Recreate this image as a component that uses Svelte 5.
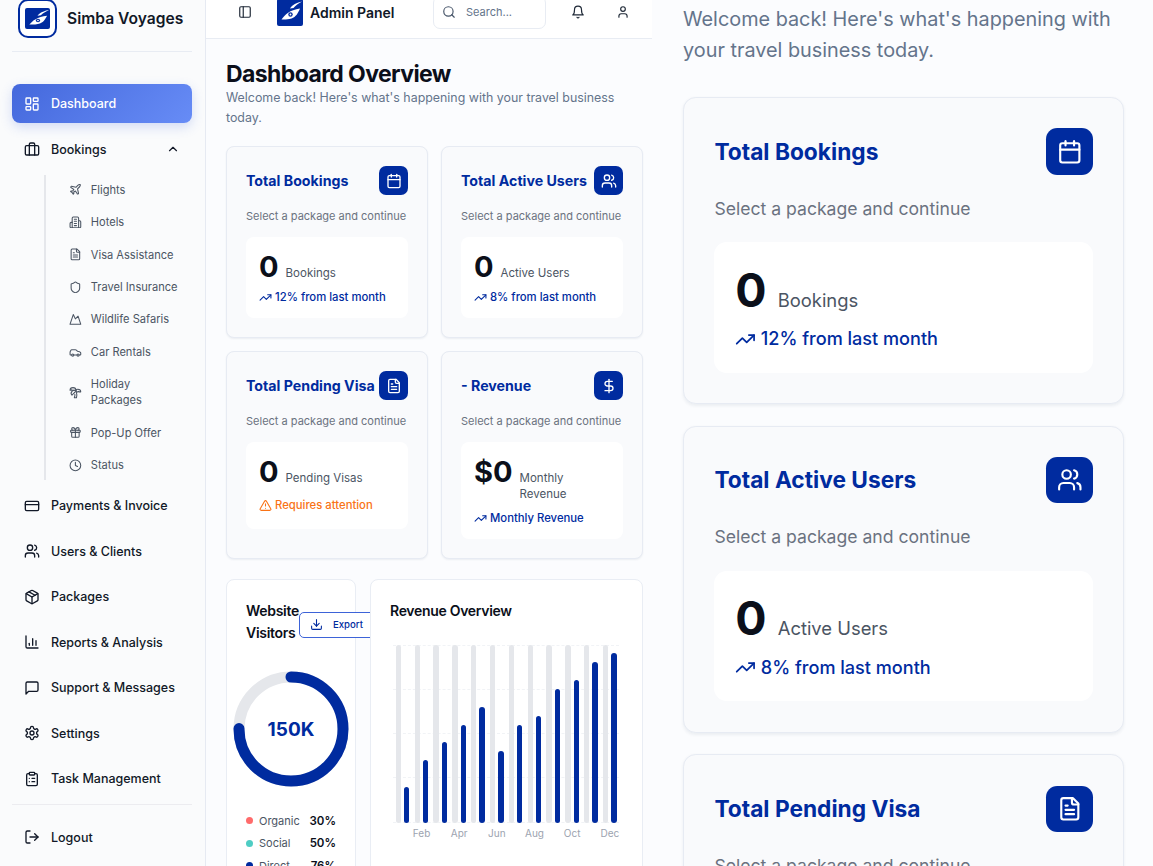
<script>
  const c = (x, y, r) => `M${x - r} ${y}a${r} ${r} 0 1 0 ${2 * r} 0a${r} ${r} 0 1 0 ${-2 * r} 0`;
  const r = (x, y, w, h, q) => `M${x + q} ${y}h${w - 2 * q}a${q} ${q} 0 0 1 ${q} ${q}v${h - 2 * q}a${q} ${q} 0 0 1 ${-q} ${q}h${-(w - 2 * q)}a${q} ${q} 0 0 1 ${-q} ${-q}v${-(h - 2 * q)}a${q} ${q} 0 0 1 ${q} ${-q}z`;

  const icons = {
    dashboard: [r(3, 3, 7, 9, 1), r(14, 3, 7, 5, 1), r(14, 12, 7, 9, 1), r(3, 16, 7, 5, 1)],
    briefcase: [r(2, 7, 20, 14, 2), 'M16 21V5a2 2 0 0 0-2-2h-4a2 2 0 0 0-2 2v16'],
    chevronUp: ['m18 15-6-6-6 6'],
    plane: ['M17.8 19.2 16 11l3.5-3.5C21 6 21.5 4 21 3c-1-.5-3 0-4.5 1.5L13 8 4.8 6.2c-.5-.1-.9.1-1.1.5l-.3.5c-.2.5-.1 1 .3 1.3L9 12l-2 3H4l-1 1 3 2 2 3 1-1v-3l3-2 3.5 5.3c.3.4.8.5 1.3.3l.5-.2c.4-.3.6-.7.5-1.2z'],
    hotel: ['M6 22V4a2 2 0 0 1 2-2h8a2 2 0 0 1 2 2v18Z', 'M6 12H4a2 2 0 0 0-2 2v6a2 2 0 0 0 2 2h2', 'M18 9h2a2 2 0 0 1 2 2v9a2 2 0 0 1-2 2h-2', 'M10 6h4', 'M10 10h4', 'M10 14h4', 'M10 18h4'],
    file: ['M15 2H6a2 2 0 0 0-2 2v16a2 2 0 0 0 2 2h12a2 2 0 0 0 2-2V7Z', 'M14 2v4a2 2 0 0 0 2 2h4', 'M10 9H8', 'M16 13H8', 'M16 17H8'],
    shield: ['M20 13c0 5-3.5 7.5-7.66 8.95a1 1 0 0 1-.67-.01C7.5 20.5 4 18 4 13V6a1 1 0 0 1 1-1c2 0 4.5-1.2 6.24-2.72a1.17 1.17 0 0 1 1.52 0C14.51 3.81 17 5 19 5a1 1 0 0 1 1 1z'],
    mountain: ['m8 3 4 8 5-5 5 15H2L8 3z'],
    car: ['M19 17h2c.6 0 1-.4 1-1v-3c0-.9-.7-1.7-1.5-1.9C18.7 10.6 16 10 16 10s-1.3-1.4-2.2-2.3c-.5-.4-1.1-.7-1.8-.7H5c-.6 0-1.1.4-1.4.9l-1.4 2.9A3.7 3.7 0 0 0 2 12v4c0 .6.4 1 1 1h2', c(7, 17, 2), 'M9 17h6', c(17, 17, 2)],
    palm: ['M13 8c0-2.76-2.46-5-5.5-5S2 5.24 2 8h2l1-1 1 1h4', 'M13 7.14A5.82 5.82 0 0 1 16.5 6c3.04 0 5.5 2.24 5.5 5h-3l-1-1-1 1h-3', 'M5.89 9.71c-2.15 2.15-2.3 5.47-.35 7.43l4.24-4.25.7-.7.71-.71 2.12-2.12c-1.95-1.96-5.27-1.8-7.42.35', 'M11 15.5c.5 2.5-.17 4.5-1 6.5h4c2-5.5-.5-12-1-14'],
    gift: [r(3, 8, 18, 4, 1), 'M12 8v13', 'M19 12v7a2 2 0 0 1-2 2H7a2 2 0 0 1-2-2v-7', 'M7.5 8a2.5 2.5 0 0 1 0-5A4.8 8 0 0 1 12 8a4.8 8 0 0 1 4.5-5 2.5 2.5 0 0 1 0 5'],
    clock: [c(12, 12, 10), 'M12 6v6l4 2'],
    card: [r(2, 5, 20, 14, 2), 'M2 10h20'],
    users: ['M16 21v-2a4 4 0 0 0-4-4H6a4 4 0 0 0-4 4v2', c(9, 7, 4), 'M22 21v-2a4 4 0 0 0-3-3.87', 'M16 3.13a4 4 0 0 1 0 7.75'],
    package: ['m7.5 4.27 9 5.15', 'M21 8a2 2 0 0 0-1-1.73l-7-4a2 2 0 0 0-2 0l-7 4A2 2 0 0 0 3 8v8a2 2 0 0 0 1 1.73l7 4a2 2 0 0 0 2 0l7-4A2 2 0 0 0 21 16Z', 'm3.3 7 8.7 5 8.7-5', 'M12 22V12'],
    chart: ['M3 3v16a2 2 0 0 0 2 2h16', 'M8 17v-3', 'M13 17V7', 'M18 17V10'],
    message: ['M21 15a2 2 0 0 1-2 2H7l-4 4V5a2 2 0 0 1 2-2h14a2 2 0 0 1 2 2z'],
    settings: ['M12.22 2h-.44a2 2 0 0 0-2 2v.18a2 2 0 0 1-1 1.73l-.43.25a2 2 0 0 1-2 0l-.15-.08a2 2 0 0 0-2.73.73l-.22.38a2 2 0 0 0 .73 2.73l.15.1a2 2 0 0 1 1 1.72v.51a2 2 0 0 1-1 1.74l-.15.09a2 2 0 0 0-.73 2.73l.22.38a2 2 0 0 0 2.73.73l.15-.08a2 2 0 0 1 2 0l.43.25a2 2 0 0 1 1 1.73V20a2 2 0 0 0 2 2h.44a2 2 0 0 0 2-2v-.18a2 2 0 0 1 1-1.73l.43-.25a2 2 0 0 1 2 0l.15.08a2 2 0 0 0 2.73-.73l.22-.39a2 2 0 0 0-.73-2.73l-.15-.08a2 2 0 0 1-1-1.74v-.5a2 2 0 0 1 1-1.74l.15-.09a2 2 0 0 0 .73-2.73l-.22-.38a2 2 0 0 0-2.73-.73l-.15.08a2 2 0 0 1-2 0l-.43-.25a2 2 0 0 1-1-1.73V4a2 2 0 0 0-2-2z', c(12, 12, 3)],
    clipboard: [r(8, 2, 8, 4, 1), 'M16 4h2a2 2 0 0 1 2 2v14a2 2 0 0 1-2 2H6a2 2 0 0 1-2-2V6a2 2 0 0 1 2-2h2', 'M12 11h4', 'M12 16h4', 'M8 11h.01', 'M8 16h.01'],
    logout: ['M9 21H5a2 2 0 0 1-2-2V5a2 2 0 0 1 2-2h4', 'm16 17 5-5-5-5', 'M21 12H9'],
    panel: [r(3, 3, 18, 18, 2), 'M9 3v18'],
    search: [c(11, 11, 8), 'm21 21-4.3-4.3'],
    bell: ['M6 8a6 6 0 0 1 12 0c0 7 3 9 3 9H3s3-2 3-9', 'M10.3 21a1.94 1.94 0 0 0 3.4 0'],
    user: ['M19 21v-2a4 4 0 0 0-4-4H9a4 4 0 0 0-4 4v2', c(12, 7, 4)],
    calendar: ['M8 2v4', 'M16 2v4', r(3, 4, 18, 18, 2), 'M3 10h18'],
    dollar: ['M12 2v20', 'M17 5H9.5a3.5 3.5 0 0 0 0 7h5a3.5 3.5 0 0 1 0 7H6'],
    trend: ['M22 7 13.5 15.5 8.5 10.5 2 17', 'M16 7h6v6'],
    alert: ['m21.73 18-8-14a2 2 0 0 0-3.48 0l-8 14A2 2 0 0 0 4 21h16a2 2 0 0 0 1.73-3', 'M12 9v4', 'M12 17h.01'],
    download: ['M21 15v4a2 2 0 0 1-2 2H5a2 2 0 0 1-2-2v-4', 'M7 10l5 5 5-5', 'M12 15V3']
  };

  const subItems = [
    ['plane', 'Flights'], ['hotel', 'Hotels'], ['file', 'Visa Assistance'], ['shield', 'Travel Insurance'],
    ['mountain', 'Wildlife Safaris'], ['car', 'Car Rentals'], ['palm', 'Holiday Packages'], ['gift', 'Pop-Up Offer'], ['clock', 'Status']
  ];
  const mainItems = [
    ['card', 'Payments & Invoice'], ['users', 'Users & Clients'], ['package', 'Packages'], ['chart', 'Reports & Analysis'],
    ['message', 'Support & Messages'], ['settings', 'Settings'], ['clipboard', 'Task Management']
  ];
  const cards = [
    { title: 'Total Bookings', icon: 'calendar', value: '0', label: 'Bookings', note: '12% from last month' },
    { title: 'Total Active Users', icon: 'users', value: '0', label: 'Active Users', note: '8% from last month' },
    { title: 'Total Pending Visa', icon: 'file', value: '0', label: 'Pending Visas', note: 'Requires attention', warn: true },
    { title: '- Revenue', icon: 'dollar', value: '$0', label: 'Monthly Revenue', note: 'Monthly Revenue' }
  ];
  const bars = [20, 35, 45, 55, 65, 40, 55, 60, 75, 80, 90, 95];
  const months = ['', 'Feb', '', 'Apr', '', 'Jun', '', 'Aug', '', 'Oct', '', 'Dec'];
  const legend = [['Organic', '30%', '#ff6b6b'], ['Social', '50%', '#4ecdc4'], ['Direct', '76%', '#002b9f']];
  const circ = 2 * Math.PI * 52;
</script>

{#snippet icon(name, cls = '')}
  <svg class="ic {cls}" viewBox="0 0 24 24" fill="none" stroke="currentColor" stroke-width="2" stroke-linecap="round" stroke-linejoin="round" aria-hidden="true">
    {#each icons[name] as d}<path {d} />{/each}
  </svg>
{/snippet}

{#snippet wing(cls)}
  <svg class={cls} viewBox="0 0 26 26" preserveAspectRatio="none" aria-hidden="true">
    <path fill="#fff" d="M13 9.500C15 6 20 3.500 25 2.500C21.500 4.500 18.500 6.500 16.500 9Z" />
    <path fill="#fff" d="M4.500 20.500C8 15.500 12.500 11 23 9.500C21 14 19 18 14.500 19.500C11 20.500 8 20.700 4.500 20.500Z" />
    <circle cx="13.500" cy="15.500" r="2.200" fill="#002b9f" />
    <circle cx="13.500" cy="15.500" r="0.900" fill="#fff" />
  </svg>
{/snippet}

{#snippet statCard(c)}
  <article class="card">
    <div class="card-head">
      <h3>{c.title}</h3>
      <span class="badge">{@render icon(c.icon)}</span>
    </div>
    <p class="card-sub">Select a package and continue</p>
    <div class="inner">
      <div class="value-row">
        <span class="value">{c.value}</span>
        <span class="value-label">{c.label}</span>
      </div>
      <div class="note" class:warn={c.warn}>
        {@render icon(c.warn ? 'alert' : 'trend')}
        <span>{c.note}</span>
      </div>
    </div>
  </article>
{/snippet}

<div class="page">
  <aside class="sidebar">
    <div class="brand">
      <div class="brand-logo"><div class="brand-mark">{@render wing('brand-wing')}</div></div>
      <span class="brand-name">Simba Voyages</span>
    </div>

    <nav class="nav">
      <div class="item active">{@render icon('dashboard')}<span>Dashboard</span></div>
      <div class="item">{@render icon('briefcase')}<span>Bookings</span>{@render icon('chevronUp', 'chev')}</div>
      <div class="sub">
        {#each subItems as [ic, label]}
          <div class="sub-item">{@render icon(ic)}<span>{label}</span></div>
        {/each}
      </div>
      {#each mainItems as [ic, label]}
        <div class="item">{@render icon(ic)}<span>{label}</span></div>
      {/each}
    </nav>
    <div class="side-foot">
      <div class="item">{@render icon('logout')}<span>Logout</span></div>
    </div>
  </aside>

  <section class="mid">
    <header class="topbar">
      <span class="tb-panel">{@render icon('panel')}</span>
      <div class="tb-logo">{@render wing('tb-wing')}</div>
      <span class="tb-title">Admin Panel</span>
      <div class="search">{@render icon('search')}<span>Search...</span></div>
      <span class="tb-bell">{@render icon('bell')}</span>
      <span class="tb-user">{@render icon('user')}</span>
    </header>

    <main class="content">
      <h1>Dashboard Overview</h1>
      <p class="lead">Welcome back! Here's what's happening with your travel business today.</p>

      <div class="grid">
        {#each cards as c}{@render statCard(c)}{/each}
      </div>

      <div class="charts">
        <article class="panel visitors">
          <div class="visitors-head">
            <h3 class="panel-title">Website Visitors</h3>
            <button class="export">{@render icon('download')}<span>Export</span></button>
          </div>
          <div class="donut">
            <svg viewBox="0 0 116 116" width="116" height="116" aria-label="Visitors">
              <circle cx="58" cy="58" r="52" fill="none" stroke="#e5e7eb" stroke-width="11" />
              <circle cx="58" cy="58" r="52" fill="none" stroke="#002b9f" stroke-width="11" stroke-linecap="round"
                stroke-dasharray="{circ * 0.75} {circ}" transform="rotate(-90 58 58)" />
              <text x="58" y="65" text-anchor="middle" class="donut-text">150K</text>
            </svg>
          </div>
          <ul class="legend">
            {#each legend as [name, val, col]}
              <li><i style="background:{col}"></i><span class="lg-name">{name}</span><b>{val}</b></li>
            {/each}
          </ul>
        </article>

        <article class="panel revenue">
          <h3 class="panel-title">Revenue Overview</h3>
          <div class="chart">
            <div class="gridlines">{#each [0, 1, 2, 3, 4] as _}<span></span>{/each}</div>
            {#each bars as b, i}
              <div class="slot">
                <div class="bar-pair">
                  <span class="bar bg"></span>
                  <span class="bar fg" style="height:{b}%"></span>
                </div>
                <span class="month">{months[i]}</span>
              </div>
            {/each}
          </div>
        </article>
      </div>
    </main>
  </section>

  <section class="zoomed">
    <div class="zoom-inner">
      <p class="lead">Welcome back! Here's what's happening with your travel business today.</p>
      <div class="zoom-cards">
        {#each cards.slice(0, 3) as c}{@render statCard(c)}{/each}
      </div>
    </div>
  </section>
</div>

<style>
  :global(body) {
    margin: 0;
    background: #fbfcfe;
    font-family: Inter, "Liberation Sans", sans-serif;
  }
  .page {
    display: flex;
    width: 1153px;
    height: 866px;
    overflow: hidden;
    background: #fbfcfe;
    color: #0b0f1a;
  }
  .ic {
    width: 16px;
    height: 16px;
    flex: none;
    display: block;
  }

  /* sidebar */
  .sidebar {
    width: 206px;
    flex: none;
    box-sizing: border-box;
    padding: 0 13px 0 12px;
    background: #fafbfc;
    border-right: 1px solid #e6eaf2;
    display: flex;
    flex-direction: column;
  }
  .brand {
    height: 52px;
    flex: none;
    box-sizing: border-box;
    border-bottom: 1px solid #e8ecf3;
    display: flex;
    align-items: flex-start;
    padding-left: 6px;
    gap: 10px;
  }
  .brand-logo {
    width: 39px;
    height: 39px;
    margin-top: -1px;
    box-sizing: border-box;
    border: 2px solid #002b9f;
    border-radius: 10px;
    background: #fff;
    display: flex;
    align-items: center;
    justify-content: center;
  }
  .brand-mark {
    width: 25px;
    height: 21px;
    background: #002b9f;
    border-radius: 2px;
    display: flex;
  }
  :global(.brand-wing) {
    width: 25px;
    height: 21px;
    display: block;
  }
  .brand-name {
    font-size: 15.6px;
    font-weight: 600;
    line-height: 38px;
    color: #111827;
  }
  .nav {
    margin-top: 32px;
    display: flex;
    flex-direction: column;
    gap: 6.5px;
  }
  .item {
    height: 39px;
    flex: none;
    box-sizing: border-box;
    padding: 0 12px;
    display: flex;
    align-items: center;
    gap: 11px;
    font-size: 12.5px;
    font-weight: 500;
    color: #111827;
    border-radius: 8px;
  }
  .item :global(.chev) {
    margin-left: auto;
    width: 14px;
    height: 14px;
  }
  .item.active {
    color: #fff;
    background: linear-gradient(135deg, #4468dc, #678cf6);
    box-shadow: 0 4px 12px rgba(68, 104, 220, 0.22);
  }
  .sub {
    margin: 0.2px 0 -0.2px 32px;
    border-left: 2px solid #e5e7eb;
    padding-right: 12px;
    display: flex;
    flex-direction: column;
    gap: 3.7px;
  }
  .sub-item {
    padding: 6.4px 0 6.4px 23px;
    display: flex;
    align-items: center;
    gap: 9px;
    font-size: 11.1px;
    line-height: 16px;
    color: #4b5563;
  }
  .sub-item .ic {
    width: 12.8px;
    height: 12.8px;
  }
  .side-foot {
    margin-top: 5.5px;
    border-top: 1px solid #ececf0;
    padding-top: 13px;
  }

  /* middle */
  .mid {
    width: 446px;
    flex: none;
    overflow: hidden;
  }
  .topbar {
    height: 39px;
    box-sizing: border-box;
    padding: 0 22px 14px 32px;
    background: #fff;
    border-bottom: 1px solid #e8ecf3;
    display: flex;
    align-items: center;
  }
  .topbar .ic {
    width: 14px;
    height: 14px;
  }
  .tb-panel,
  .tb-bell,
  .tb-user {
    color: #1f2937;
    flex: none;
  }
  .tb-logo {
    width: 26px;
    height: 27px;
    flex: none;
    margin-left: 25px;
    background: #002b9f;
    border-radius: 2px;
  }
  :global(.tb-wing) {
    width: 26px;
    height: 26px;
    display: block;
  }
  .tb-title {
    margin-left: 7px;
    width: 84px;
    flex: none;
    font-size: 14px;
    font-weight: 600;
    color: #111827;
    white-space: nowrap;
  }
  .search {
    margin-left: 39px;
    width: 113px;
    height: 33px;
    flex: none;
    box-sizing: border-box;
    border: 1px solid #e8ecf3;
    border-radius: 7px;
    background: #fff;
    padding-left: 8px;
    display: flex;
    align-items: center;
    gap: 10px;
    font-size: 11px;
    color: #64748b;
  }
  .search .ic {
    color: #475569;
  }
  .tb-bell {
    margin-left: 25px;
  }
  .tb-user {
    margin-left: 31px;
  }
  .content {
    padding: 21px 9px 0 20px;
  }
  h1 {
    margin: 0;
    font-size: 23px;
    line-height: 28px;
    font-weight: 700;
    letter-spacing: -0.6px;
    color: #0b0f1a;
  }
  .lead {
    margin: 0;
    font-size: 12.4px;
    line-height: 20px;
    color: #64748b;
  }
  .grid {
    margin-top: 18px;
    display: grid;
    grid-template-columns: minmax(0, 1fr) minmax(0, 1fr);
    gap: 13px;
  }
  .card {
    box-sizing: border-box;
    border: 1px solid #e7ebf3;
    border-radius: 8px;
    background: #f9fafc;
    padding: 19px;
    box-shadow: 0 1px 2px rgba(30, 50, 90, 0.07);
  }
  .card-head {
    display: flex;
    align-items: center;
    justify-content: space-between;
    gap: 4px;
  }
  .card-head h3 {
    margin: 0;
    font-size: 14.2px;
    line-height: 20px;
    font-weight: 700;
    color: #002b9f;
    white-space: nowrap;
  }
  .badge {
    width: 29px;
    height: 29px;
    flex: none;
    border-radius: 7px;
    background: #002b9f;
    color: #fff;
    display: flex;
    align-items: center;
    justify-content: center;
  }
  .card-sub {
    margin: 13px 0;
    font-size: 11px;
    line-height: 16px;
    color: #6b7280;
  }
  .inner {
    background: #fff;
    border-radius: 8px;
    padding: 13px;
  }
  .value-row {
    display: flex;
    align-items: baseline;
    gap: 7px;
  }
  .value {
    font-size: 29px;
    line-height: 34px;
    font-weight: 700;
    color: #0b0f1a;
    flex: none;
  }
  .value-label {
    font-size: 11.5px;
    line-height: 16px;
    color: #4b5563;
    margin-bottom: 3px;
  }
  .note {
    margin-top: 5px;
    display: flex;
    align-items: center;
    gap: 3px;
    font-size: 11.3px;
    line-height: 16px;
    font-weight: 500;
    color: #002b9f;
    white-space: nowrap;
  }
  .note .ic {
    width: 13px;
    height: 13px;
  }
  .note.warn {
    color: #f97316;
    padding: 3px 0;
  }

  /* charts */
  .charts {
    margin-top: 19.500px;
    display: grid;
    grid-template-columns: 130px minmax(0, 1fr);
    gap: 14px;
  }
  .panel {
    box-sizing: border-box;
    height: 400px;
    border: 1px solid #e9edf4;
    border-radius: 8px;
    background: #fff;
    padding: 20px 19px;
  }
  .revenue {
    position: relative;
  }
  .panel-title {
    margin: 0;
    font-size: 14px;
    line-height: 22px;
    font-weight: 600;
    letter-spacing: -0.3px;
    color: #0b0f1a;
  }
  .visitors-head {
    display: flex;
    align-items: flex-start;
    height: 44px;
  }
  .export {
    flex: none;
    margin-top: 12px;
    width: 76px;
    height: 26px;
    box-sizing: border-box;
    padding: 0 0 0 10px;
    border: 1px solid #3d63d8;
    border-radius: 5px;
    background: #fff;
    display: flex;
    align-items: center;
    gap: 10px;
    font: 500 9.600px Inter, sans-serif;
    color: #002b9f;
  }
  .export .ic {
    width: 13px;
    height: 13px;
  }
  .donut {
    margin: 27px -13px 0;
    display: flex;
    justify-content: center;
  }
  .donut svg {
    display: block;
    overflow: visible;
  }
  .donut-text {
    font: 700 19px Inter, sans-serif;
    fill: #002b9f;
  }
  .legend {
    list-style: none;
    margin: 26px 0 0;
    padding: 0;
    display: flex;
    flex-direction: column;
    gap: 6.6px;
  }
  .legend li {
    display: flex;
    align-items: center;
    font-size: 11px;
    line-height: 16px;
    color: #4b5563;
  }
  .legend i {
    width: 7px;
    height: 7px;
    border-radius: 50%;
    margin-right: 6px;
    flex: none;
  }
  .legend b {
    margin-left: auto;
    font-size: 11.5px;
    font-weight: 600;
    color: #0b0f1a;
  }
  .chart {
    position: relative;
    margin: 23px 0 0 3.300px;
    width: 226px;
    height: 178px;
    display: flex;
  }
  .gridlines {
    position: absolute;
    inset: 0;
    display: flex;
    flex-direction: column;
    justify-content: space-between;
  }
  .gridlines span {
    border-top: 1px dashed #f1f3f6;
  }
  .slot {
    position: relative;
    width: 18.83px;
    height: 100%;
    flex: none;
  }
  .bar-pair {
    position: absolute;
    inset: 0 0 0 2.5px;
    display: flex;
    align-items: flex-end;
    gap: 3px;
  }
  .bar {
    width: 5.300px;
    border-radius: 3px;
    display: block;
  }
  .bar.bg {
    height: 100%;
    background: #e5e7eb;
  }
  .bar.fg {
    background: #002b9f;
  }
  .month {
    position: absolute;
    top: 100%;
    left: -10px;
    right: -10px;
    margin-top: 4px;
    text-align: center;
    font-size: 10px;
    line-height: 12px;
    color: #9ca3af;
  }

  /* enlarged copy */
  .zoomed {
    flex: 1;
    min-width: 0;
    overflow: hidden;
  }
  .zoom-inner {
    zoom: 1.6;
    padding: 2.5px 18px 0 19.400px;
  }
  .zoom-inner .lead {
    line-height: 19.400px;
  }
  .zoom-cards {
    margin-top: 19.300px;
    display: flex;
    flex-direction: column;
    gap: 13.600px;
  }
</style>
